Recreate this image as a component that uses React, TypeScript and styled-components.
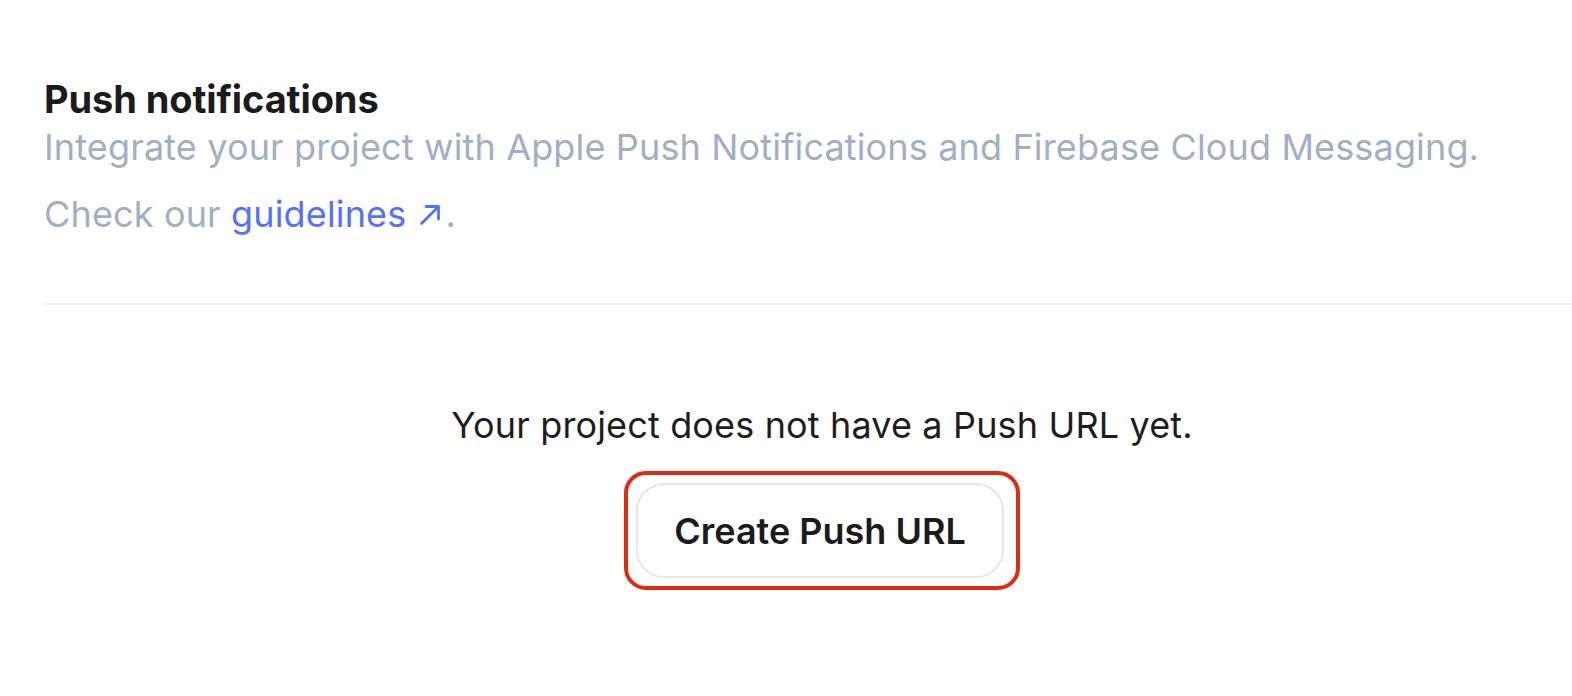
import React from "react";
import styled, { createGlobalStyle } from "styled-components";

const GlobalStyle = createGlobalStyle`
  html, body {
    margin: 0;
    padding: 0;
    background: #ffffff;
    overflow: hidden;
  }
  body {
    font-family: Inter, "Noto Sans", sans-serif;
    -webkit-font-smoothing: antialiased;
  }
`;

const Page = styled.div`
  width: 1600px;
  padding: 75px 0 0 44px;
  box-sizing: border-box;
`;

const Header = styled.header`
  display: flex;
  flex-direction: column;
  padding-bottom: 65px;
  border-bottom: 2px solid #efefef;
`;

const Title = styled.h1`
  margin: 0;
  font-size: 38px;
  line-height: 48px;
  font-weight: 700;
  color: #1b1b1b;
  letter-spacing: -0.1px;
`;

const Description = styled.p<{ $gap?: number }>`
  margin: ${(p) => p.$gap ?? 0}px 0 0;
  font-size: 36px;
  line-height: 48px;
  font-weight: 400;
  color: #a0afc3;
  letter-spacing: 0.15px;
`;

const Link = styled.a`
  color: #5470ff;
  text-decoration: none;
  display: inline-flex;
  align-items: center;
  gap: 13px;
  margin-right: 4px;
`;

const Empty = styled.section`
  display: flex;
  flex-direction: column;
  align-items: center;
  padding-top: 96px;
`;

const EmptyText = styled.p`
  margin: 0;
  font-size: 36px;
  line-height: 48px;
  color: #1d1d1d;
  letter-spacing: 0.15px;
`;

const Highlight = styled.div`
  margin-top: 22px;
  padding: 8px 12px 8px 8px;
  border: 4px solid #e22a12;
  border-radius: 22px;
  display: flex;
`;

const Button = styled.button`
  width: 368px;
  height: 95px;
  border: 2px solid #e6e6e6;
  border-radius: 28px;
  background: #ffffff;
  font-family: Inter, "Noto Sans", sans-serif;
  font-size: 36px;
  font-weight: 600;
  color: #1b1b1b;
  cursor: pointer;
`;

const ArrowIcon = () => (
  <svg width="22" height="22" viewBox="0 0 22 22" fill="none" stroke="currentColor" strokeWidth="2.8" strokeLinecap="round" strokeLinejoin="round" style={{ marginTop: 2 }}>
    <path d="M2.5 19.5 19 3" />
    <path d="M7 2.5h12.5V15" />
  </svg>
);

export default function App() {
  return (
    <>
      <GlobalStyle />
      <Page>
        <Header>
          <Title>Push notifications</Title>
          <Description>
            Integrate your project with Apple Push Notifications and Firebase Cloud Messaging.
          </Description>
          <Description $gap={19}>
            Check our <Link href="#">guidelines <ArrowIcon /></Link>.
          </Description>
        </Header>
        <Empty>
          <EmptyText>Your project does not have a Push URL yet.</EmptyText>
          <Highlight>
            <Button>Create Push URL</Button>
          </Highlight>
        </Empty>
      </Page>
    </>
  );
}
